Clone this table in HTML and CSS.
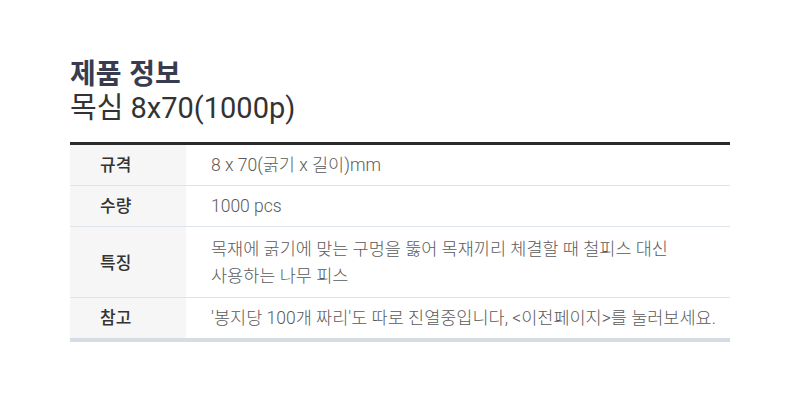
FILE: index.html
```html
<!DOCTYPE html>
<html lang="ko">

<head>
    <meta charset="UTF-8">
    <meta name="viewport" content="width=device-width, initial-scale=1.0">
    <title>제품 정보</title>
    <link rel="stylesheet" href="styles.css">
</head>

<body>
    <div class="product">
        <h2 class="product-title">제품 정보</h2>
        <p class="product-name">목심 8x70(1000p)</p>

        <table class="spec">
            <tr>
                <th>규격</th>
                <td>8 x 70(굵기 x 길이)mm</td>
            </tr>
            <tr>
                <th>수량</th>
                <td>1000 pcs</td>
            </tr>
            <tr class="multi">
                <th>특징</th>
                <td>목재에 굵기에 맞는 구멍을 뚫어 목재끼리 체결할 때 철피스 대신<br>사용하는 나무 피스</td>
            </tr>
            <tr>
                <th>참고</th>
                <td>'봉지당 100개 짜리'도 따로 진열중입니다, &lt;이전페이지&gt;를 눌러보세요.</td>
            </tr>
        </table>
    </div>
</body>

</html>
```

FILE: styles.css
```css
body {
    margin: 0;
    padding: 0;
    background-color: #fff;
    font-family: Roboto, "Noto Sans CJK KR", sans-serif;
    color: #333;
}

.product {
    padding: 54px 70px 0 70px;
}

.product-title {
    margin: 0;
    font-family: "Noto Sans CJK KR", sans-serif;
    font-size: 28px;
    font-weight: bold;
    line-height: 36px;
    color: #393c50;
}

.product-name {
    margin: 0;
    font-size: 29px;
    font-weight: normal;
    line-height: 36px;
    color: #333;
}

.spec {
    margin-top: 16px;
    width: 660px;
    border-collapse: collapse;
    border-top: 3px solid #2b2b2b;
    border-bottom: 4px solid #d6dce4;
}

.spec th,
.spec td {
    border-bottom: 1px solid #dfe4ea;
    font-size: 17.5px;
    line-height: 27px;
    vertical-align: middle;
}

.spec tr:last-child th,
.spec tr:last-child td {
    border-bottom: none;
}

.spec th {
    width: 86px;
    padding: 7px 0 6px 30px;
    background-color: #f6f6f6;
    font-size: 17px;
    font-weight: 500;
    color: #333;
    text-align: left;
}

.spec td {
    padding: 7px 0 6px 25px;
    font-weight: 300;
    color: #5a5a5a;
}

.spec .multi th,
.spec .multi td {
    padding-top: 9px;
    padding-bottom: 7px;
}
```
